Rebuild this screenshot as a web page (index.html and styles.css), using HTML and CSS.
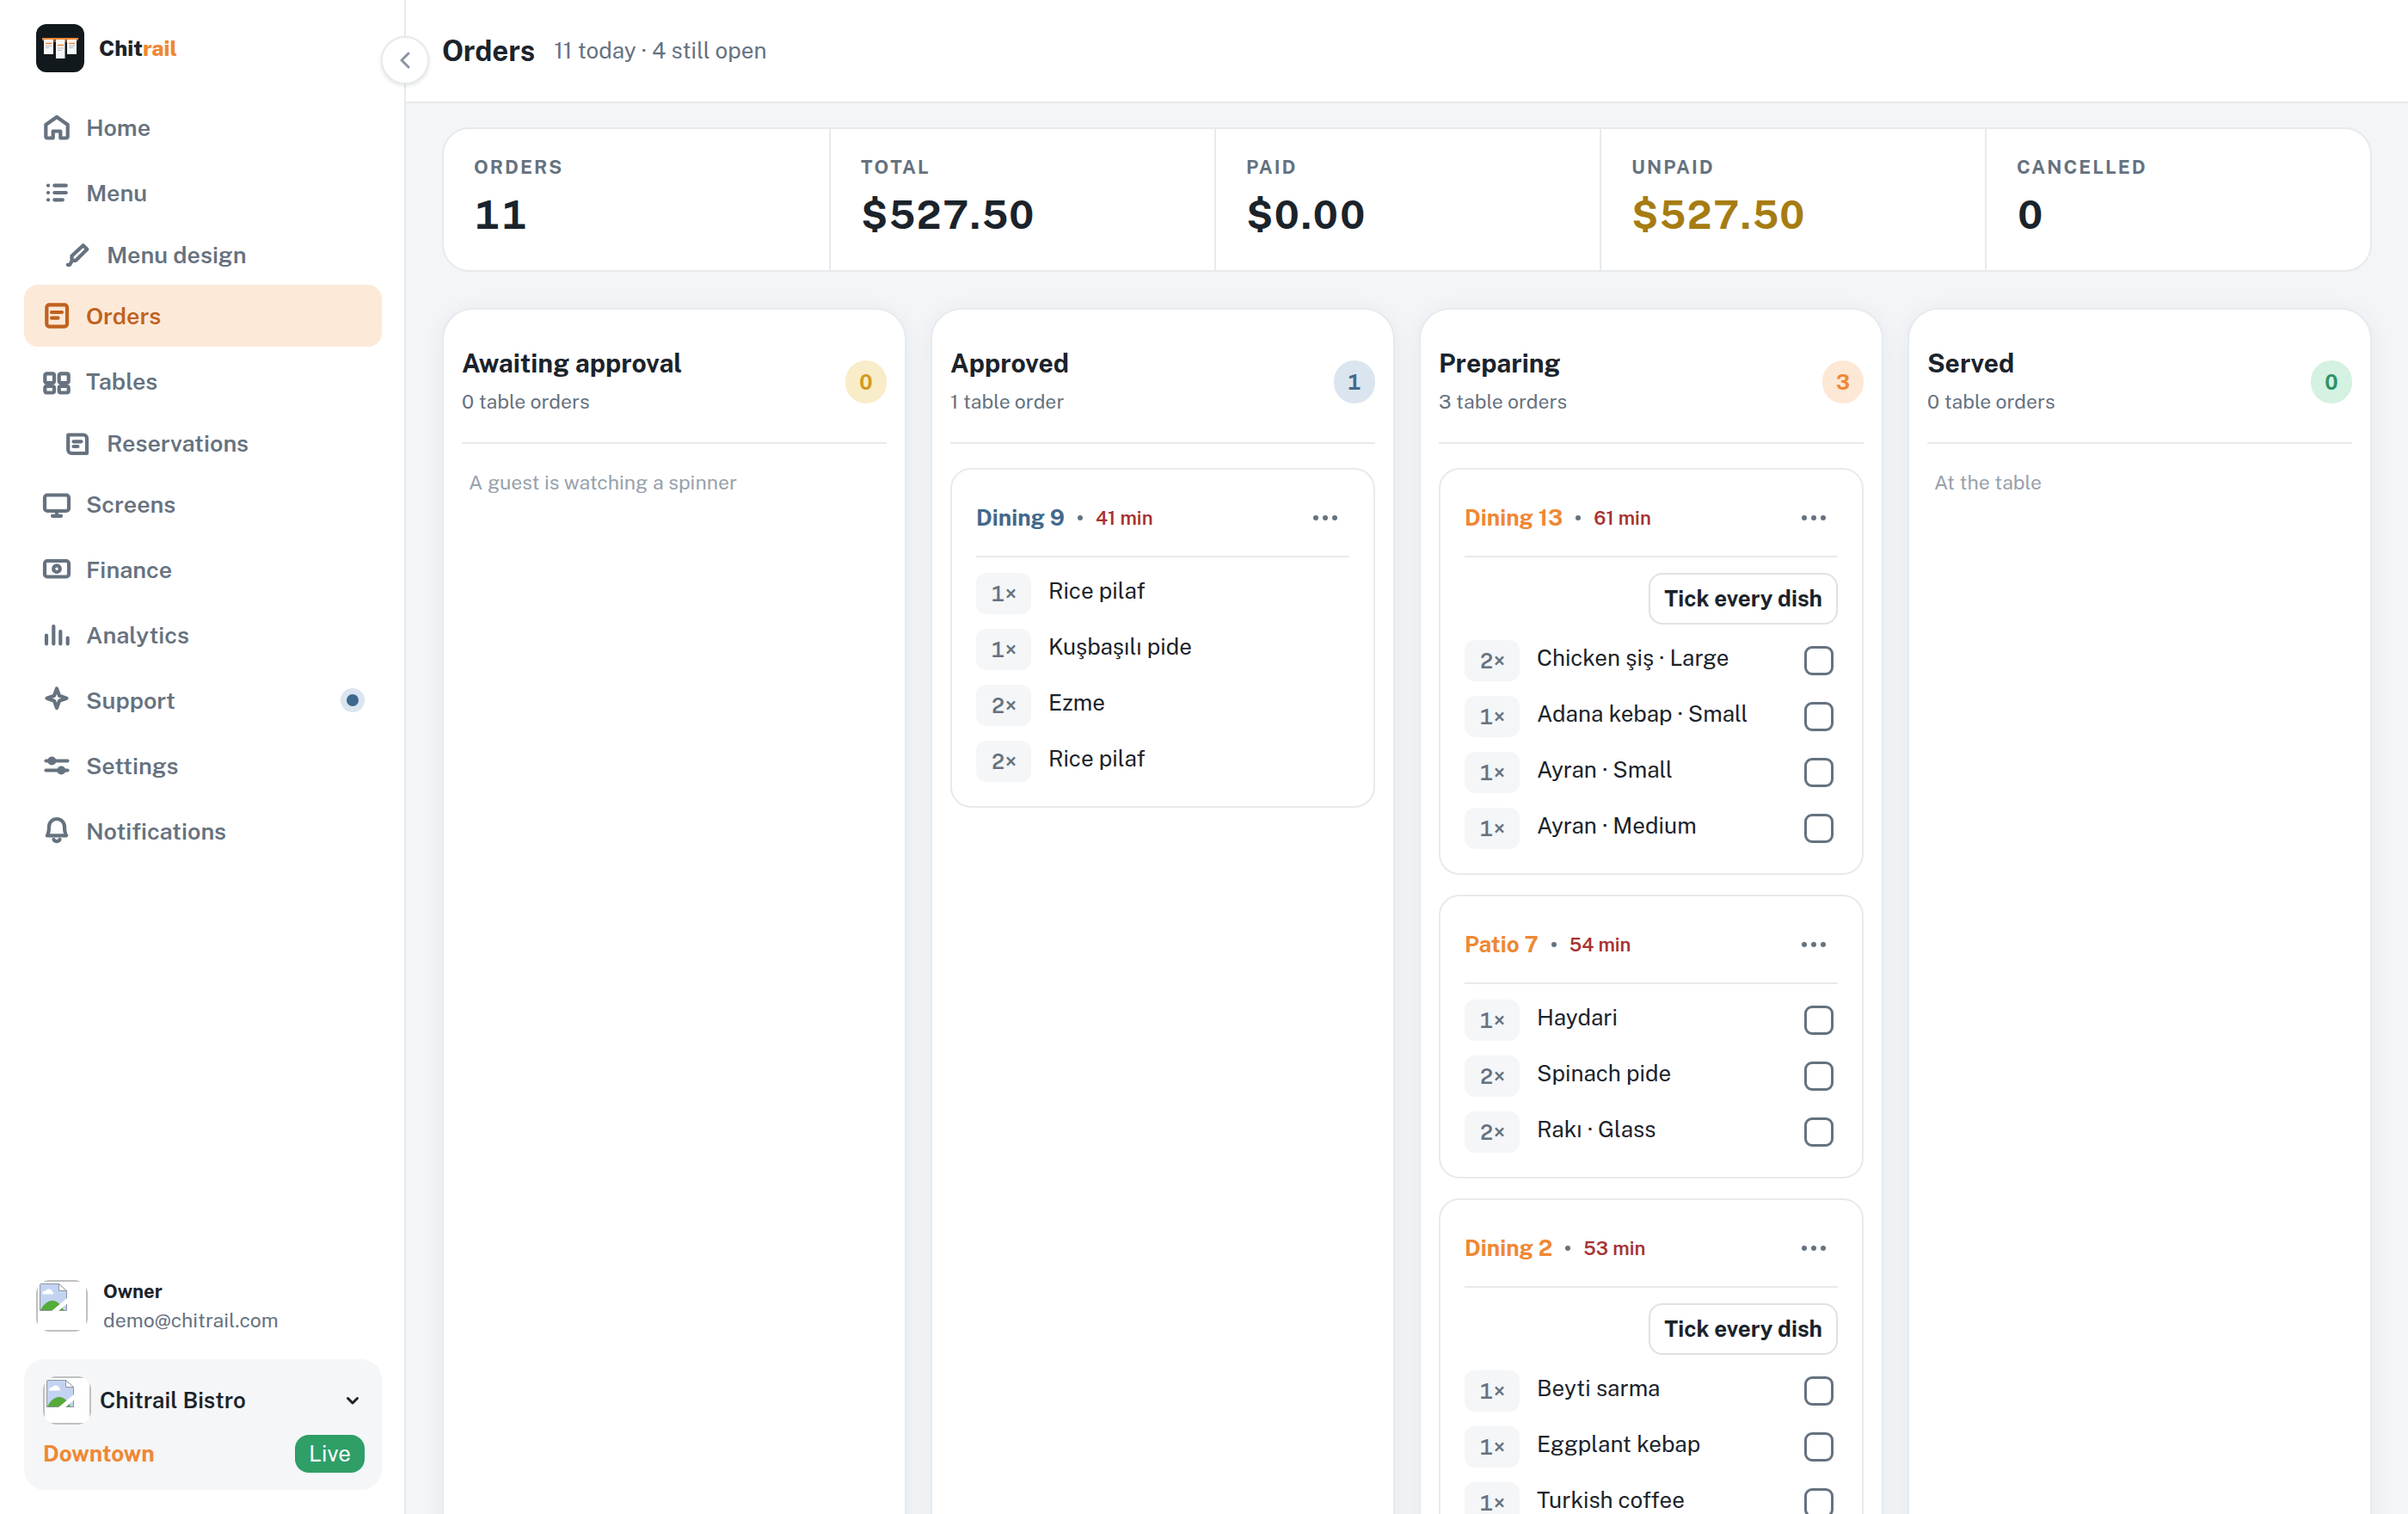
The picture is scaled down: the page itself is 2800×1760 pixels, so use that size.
FILE: index.html
```html
<!DOCTYPE html>
<html lang="en">
<head>
  <meta charset="UTF-8">
  <meta name="viewport" content="width=device-width, initial-scale=1.0">
  <title>Orders - Chitrail</title>
  <link rel="stylesheet" href="styles.css">
</head>
<body>
  <!-- Shared symbols -->
  <svg class="symbols" aria-hidden="true">
    <symbol id="broken" viewBox="0 0 32 32">
      <path d="M0.5 0.5H22.5L31.5 9V31.5H0.5Z" fill="#c3d3f2" stroke="#8f959d"/>
      <path d="M3 12.5a4 4 0 0 1 4-4a4.500 4.500 0 0 1 8 1a3 3 0 0 1 1 3Z" fill="#fff"/>
      <path d="M1 31C5 24 9 20 15 20C21 20 25 25 28 31Z" fill="#55ab38"/>
      <path d="M22.500 0.500V8.500H31.500Z" fill="#fff" stroke="#8f959d"/>
      <path d="M14 32L32 17V23.500L22 32Z" fill="#fff"/>
    </symbol>
    <symbol id="dots" viewBox="0 0 36 36">
      <circle cx="7" cy="18" r="3"/><circle cx="18" cy="18" r="3"/><circle cx="29" cy="18" r="3"/>
    </symbol>
  </svg>

  <div class="app">
    <aside class="sidebar">
      <a class="brand" href="#">
        <svg width="56" height="56" viewBox="0 0 56 56">
          <rect width="56" height="56" rx="12" fill="#12191d"/>
          <rect x="7" y="16" width="42" height="2.500" fill="#ef8834"/>
          <path d="M8 18h3v2h-3zM19 18h5v3h-5zM32 18h5v3h-5zM45 18h3v2h-3z" fill="#9a531d"/>
          <path d="M9 18h11v17H9zM23 18h10.500v22H23zM36 18h11v17H36z" fill="#f5f6f7"/>
          <path d="M11 22.500h7M25 24.500h7M38 22.500h7" stroke="#ef8834" stroke-width="1.500"/>
          <path d="M11 25.500h7M11 27.500h4M25 28h7M25 30.500h5M38 25.500h7M38 27.500h5" stroke="#a9adb2" stroke-width="0.800"/>
        </svg>
        <span>Chit<b>rail</b></span>
      </a>

      <nav class="nav">
        <a class="nav-item" href="#">
          <svg class="icon" viewBox="0 0 36 36"><path d="M18 6L5.300 15V28.500a2 2 0 0 0 2 2H13.700V22.500h8.600v8h6.400a2 2 0 0 0 2-2V15Z"/></svg>
          Home
        </a>
        <a class="nav-item" href="#">
          <svg class="icon" viewBox="0 0 36 36"><path d="M8 9.700h.1M8 18h.1M8 26.300h.1M15.300 9.700h13.500M15.300 18h13.500M15.300 26.300h9.600"/></svg>
          Menu
        </a>
        <a class="nav-item nav-sub" href="#">
          <svg class="icon" viewBox="0 0 36 36"><path d="M24.700 7.200L29.300 11.700L16.200 24.800H11.500V19.500Z"/><path d="M12 25L9 29.800H6.800"/></svg>
          Menu design
        </a>
        <a class="nav-item active" href="#">
          <svg class="icon" viewBox="0 0 36 36"><rect x="6.300" y="5.300" width="23.700" height="25.300" rx="3"/><path d="M12 14h12M12 20.700h7.500"/></svg>
          Orders
        </a>
        <a class="nav-item" href="#">
          <svg class="icon" viewBox="0 0 36 36"><rect x="4.300" y="9.300" width="10.700" height="10.700" rx="2"/><rect x="20.700" y="9.300" width="11" height="10.700" rx="2"/><rect x="4.300" y="24" width="10.700" height="7.500" rx="2"/><rect x="20.700" y="24" width="11" height="7.500" rx="2"/></svg>
          Tables
        </a>
        <a class="nav-item nav-sub" href="#">
          <svg class="icon" viewBox="0 0 36 36"><path d="M7.200 8.500H25a4 4 0 0 1 4 4V30H11.200a4 4 0 0 1-4-4Z"/><path d="M13.500 16.300h9M13.500 22h5"/></svg>
          Reservations
        </a>
        <a class="nav-item" href="#">
          <svg class="icon" viewBox="0 0 36 36"><rect x="4" y="7.500" width="28" height="18.500" rx="3"/><path d="M18 26v5.500M13 31.800h10"/></svg>
          Screens
        </a>
        <a class="nav-item" href="#">
          <svg class="icon" viewBox="0 0 36 36"><rect x="4" y="8" width="28" height="18.500" rx="3"/><circle cx="18" cy="17.200" r="3.800"/></svg>
          Finance
        </a>
        <a class="nav-item" href="#">
          <svg class="icon" viewBox="0 0 36 36"><path d="M6 18.500v10M14.300 8v20.500M22.300 14v14.500M30.700 21.500v7"/></svg>
          Analytics
        </a>
        <a class="nav-item" href="#">
          <svg class="icon" viewBox="0 0 36 36"><path d="M18 4.500L21 12.700L29.500 15.700L21 18.700L18 27L15 18.700L6.500 15.700L15 12.700Z"/></svg>
          Support
          <span class="nav-dot"></span>
        </a>
        <a class="nav-item" href="#">
          <svg class="icon" viewBox="0 0 36 36"><path d="M5.500 12.500h25M5.500 23.500h25"/><circle class="solid" cx="12.300" cy="12.500" r="3"/><circle class="solid" cx="23.300" cy="23.500" r="3"/></svg>
          Settings
        </a>
        <a class="nav-item" href="#">
          <svg class="icon" viewBox="0 0 36 36"><path d="M6.800 23.300C9 20 9 17 9 13a9 9 0 0 1 18 0c0 4 0 7 2.200 10.300Z"/><path d="M14.500 28a3.700 3 0 0 0 7 0"/></svg>
          Notifications
        </a>
      </nav>

      <div class="account">
        <span class="avatar avatar-user"><svg><use href="#broken"/></svg></span>
        <div>
          <div class="account-name">Owner</div>
          <div class="account-email">demo@chitrail.com</div>
        </div>
      </div>

      <div class="venue">
        <button class="venue-switch" type="button">
          <span class="avatar avatar-venue"><svg><use href="#broken"/></svg></span>
          <span class="venue-name">Chitrail Bistro</span>
          <svg class="chevron" viewBox="0 0 28 28"><path d="M8.500 11.500L14 17L19.500 11.500"/></svg>
        </button>
        <div class="venue-row">
          <span class="venue-branch">Downtown</span>
          <span class="live">Live</span>
        </div>
      </div>

      <button class="collapse" type="button" aria-label="Collapse sidebar">
        <svg viewBox="0 0 28 28"><path d="M18 6L10 14L18 22"/></svg>
      </button>
    </aside>

    <main class="main">
      <header class="topbar">
        <h1>Orders</h1>
        <p>11 today · 4 still open</p>
      </header>

      <div class="content">
        <dl class="stats">
          <div class="stat"><dt>Orders</dt><dd>11</dd></div>
          <div class="stat"><dt>Total</dt><dd>$527.50</dd></div>
          <div class="stat"><dt>Paid</dt><dd>$0.00</dd></div>
          <div class="stat"><dt>Unpaid</dt><dd class="due">$527.50</dd></div>
          <div class="stat"><dt>Cancelled</dt><dd>0</dd></div>
        </dl>

        <div class="board">
          <section class="column">
            <div class="column-head">
              <div>
                <h2>Awaiting approval</h2>
                <p>0 table orders</p>
              </div>
              <span class="count count-yellow">0</span>
            </div>
            <p class="empty">A guest is watching a spinner</p>
          </section>

          <section class="column">
            <div class="column-head">
              <div>
                <h2>Approved</h2>
                <p>1 table order</p>
              </div>
              <span class="count count-blue">1</span>
            </div>
            <article class="card">
              <div class="card-head">
                <h3 class="blue">Dining 9</h3><i class="sep"></i><span class="age">41 min</span>
                <button class="more" type="button" aria-label="More"><svg><use href="#dots"/></svg></button>
              </div>
              <ul class="dishes">
                <li><span class="qty">1×</span><span class="dish">Rice pilaf</span></li>
                <li><span class="qty">1×</span><span class="dish">Kuşbaşılı pide</span></li>
                <li><span class="qty">2×</span><span class="dish">Ezme</span></li>
                <li><span class="qty">2×</span><span class="dish">Rice pilaf</span></li>
              </ul>
            </article>
          </section>

          <section class="column">
            <div class="column-head">
              <div>
                <h2>Preparing</h2>
                <p>3 table orders</p>
              </div>
              <span class="count count-orange">3</span>
            </div>
            <article class="card">
              <div class="card-head">
                <h3>Dining 13</h3><i class="sep"></i><span class="age">61 min</span>
                <button class="more" type="button" aria-label="More"><svg><use href="#dots"/></svg></button>
              </div>
              <button class="tick-all" type="button">Tick every dish</button>
              <ul class="dishes">
                <li><span class="qty">2×</span><label class="dish" for="d1">Chicken şiş · Large</label><input type="checkbox" id="d1"></li>
                <li><span class="qty">1×</span><label class="dish" for="d2">Adana kebap · Small</label><input type="checkbox" id="d2"></li>
                <li><span class="qty">1×</span><label class="dish" for="d3">Ayran · Small</label><input type="checkbox" id="d3"></li>
                <li><span class="qty">1×</span><label class="dish" for="d4">Ayran · Medium</label><input type="checkbox" id="d4"></li>
              </ul>
            </article>
            <article class="card">
              <div class="card-head">
                <h3>Patio 7</h3><i class="sep"></i><span class="age">54 min</span>
                <button class="more" type="button" aria-label="More"><svg><use href="#dots"/></svg></button>
              </div>
              <ul class="dishes">
                <li><span class="qty">1×</span><label class="dish" for="d5">Haydari</label><input type="checkbox" id="d5"></li>
                <li><span class="qty">2×</span><label class="dish" for="d6">Spinach pide</label><input type="checkbox" id="d6"></li>
                <li><span class="qty">2×</span><label class="dish" for="d7">Rakı · Glass</label><input type="checkbox" id="d7"></li>
              </ul>
            </article>
            <article class="card">
              <div class="card-head">
                <h3>Dining 2</h3><i class="sep"></i><span class="age">53 min</span>
                <button class="more" type="button" aria-label="More"><svg><use href="#dots"/></svg></button>
              </div>
              <button class="tick-all" type="button">Tick every dish</button>
              <ul class="dishes">
                <li><span class="qty">1×</span><label class="dish" for="d8">Beyti sarma</label><input type="checkbox" id="d8"></li>
                <li><span class="qty">1×</span><label class="dish" for="d9">Eggplant kebap</label><input type="checkbox" id="d9"></li>
                <li><span class="qty">1×</span><label class="dish" for="d10">Turkish coffee</label><input type="checkbox" id="d10"></li>
              </ul>
            </article>
          </section>

          <section class="column">
            <div class="column-head">
              <div>
                <h2>Served</h2>
                <p>0 table orders</p>
              </div>
              <span class="count count-green">0</span>
            </div>
            <p class="empty">At the table</p>
          </section>
        </div>
      </div>
    </main>
  </div>
</body>
</html>
```

FILE: styles.css
```css
* {
  box-sizing: border-box;
}
body {
  margin: 0;
  font-family: "Public Sans", Inter, "Liberation Sans", sans-serif;
  font-size: 26px;
  line-height: 40px;
  color: #1b232b;
  background: #f3f5f8;
}
h1, h2, h3, p, dl, dd, ul {
  margin: 0;
  padding: 0;
}
a {
  color: inherit;
  text-decoration: none;
}
button {
  font: inherit;
  color: inherit;
  background: none;
  border: 0;
  padding: 0;
  cursor: pointer;
}
.symbols {
  display: none;
}
.app {
  display: flex;
  height: 100vh;
  overflow: hidden;
}

/* Sidebar */
.sidebar {
  position: relative;
  display: flex;
  flex-direction: column;
  flex: 0 0 472px;
  padding: 28px 26px 28px 28px;
  background: #fff;
  border-right: 2px solid #e7eaed;
}
.brand {
  display: flex;
  align-items: center;
  gap: 17px;
  padding-left: 14px;
  font-size: 25px;
  font-weight: 800;
}
.brand b {
  font-weight: 800;
  color: #ef8834;
}
.nav {
  display: flex;
  flex-direction: column;
  gap: 4px;
  margin-top: 28px;
}
.nav-item {
  display: flex;
  align-items: center;
  gap: 16px;
  height: 72px;
  padding: 0 20px;
  border-radius: 16px;
  font-size: 27px;
  font-weight: 600;
  color: #66727f;
}
.nav-sub {
  height: 63px;
  padding-left: 44px;
}
.nav-item.active {
  color: #c0621f;
  background: #fde9d8;
}
.icon {
  width: 36px;
  height: 36px;
  fill: none;
  stroke: currentColor;
  stroke-width: 4.2;
  stroke-linecap: round;
  stroke-linejoin: round;
}
.icon .solid {
  fill: currentColor;
}
.nav-dot {
  width: 28px;
  height: 28px;
  margin-left: auto;
  border: 7px solid #dae5ef;
  border-radius: 50%;
  background: #3d688d;
}
.account {
  display: flex;
  align-items: center;
  gap: 18px;
  margin-top: auto;
  padding-left: 14px;
  font-size: 23px;
  line-height: 34px;
}
.account-name {
  font-size: 22px;
  font-weight: 700;
}
.account-email {
  color: #66727f;
}
.avatar {
  display: block;
  overflow: hidden;
  background: linear-gradient(#fff, #fff) center / calc(100% - 4px) calc(100% - 4px) no-repeat #c0c0c0;
}
.avatar svg {
  display: block;
  width: 32px;
  height: 32px;
  margin: 4px;
}
.avatar-user {
  width: 60px;
  height: 60px;
  border-radius: 16px;
}
.avatar-venue {
  width: 56px;
  height: 56px;
  border-radius: 16px;
}
.venue {
  margin-top: 28px;
  padding: 20px 20px 20px 22px;
  border-radius: 24px;
  background: #f4f6f8;
}
.venue-switch {
  display: flex;
  align-items: center;
  gap: 10px;
  width: 100%;
  font-weight: 600;
}
.chevron {
  width: 28px;
  height: 28px;
  margin-left: auto;
  fill: none;
  stroke: currentColor;
  stroke-width: 3;
  stroke-linecap: round;
  stroke-linejoin: round;
}
.venue-row {
  display: flex;
  align-items: center;
  justify-content: space-between;
  margin-top: 12px;
}
.venue-branch {
  font-weight: 700;
  color: #ef8834;
}
.live {
  padding: 2px 16px;
  border-radius: 16px;
  color: #fff;
  background: #2f9e67;
}
.collapse {
  position: absolute;
  top: 42px;
  right: -29px;
  z-index: 1;
  width: 56px;
  height: 56px;
  border: 2px solid #e7eaed;
  border-radius: 50%;
  background: #fff;
  box-shadow: 0 2px 4px rgba(20, 30, 45, 0.12);
}
.collapse svg {
  display: block;
  width: 28px;
  height: 28px;
  margin: 0 auto;
  fill: none;
  stroke: #8a95a1;
  stroke-width: 3;
  stroke-linecap: round;
  stroke-linejoin: round;
}

/* Main */
.main {
  flex: 1;
  min-width: 0;
}
.topbar {
  display: flex;
  align-items: center;
  gap: 22px;
  height: 120px;
  padding: 0 42px;
  background: #fff;
  border-bottom: 2px solid #e7eaed;
}
h1 {
  font-size: 33px;
  font-weight: 700;
}
.topbar p {
  color: #66727f;
}
.content {
  padding: 28px 42px;
}
.stats {
  display: grid;
  grid-template-columns: repeat(5, 1fr);
  border: 2px solid #e7eaed;
  border-radius: 32px;
  background: #fff;
}
.stat {
  height: 164px;
  padding: 28px 35px;
}
.stat + .stat {
  border-left: 2px solid #e7eaed;
}
.stat dt {
  font-size: 22px;
  font-weight: 700;
  line-height: 32px;
  letter-spacing: 2px;
  text-transform: uppercase;
  color: #66727f;
}
.stat dd {
  margin-top: 12px;
  font-size: 45px;
  font-weight: 700;
  line-height: 56px;
  font-variant-numeric: tabular-nums;
}
.stat .due {
  color: #a67c12;
}

/* Board */
.board {
  display: grid;
  grid-template-columns: repeat(4, 1fr);
  gap: 28px;
  margin-top: 42px;
}
.column {
  padding: 42px 21px 24px;
  border: 2px solid #e7eaed;
  border-radius: 36px;
  background: #fff;
  box-shadow: 0 4px 28px rgba(30, 50, 80, 0.06);
}
.column-head {
  display: flex;
  align-items: center;
  justify-content: space-between;
  height: 114px;
  margin-bottom: 28px;
  padding-bottom: 28px;
  border-bottom: 2px solid #e7eaed;
}
h2 {
  font-size: 30px;
  font-weight: 700;
  line-height: 46px;
}
.column-head p {
  font-size: 23px;
  line-height: 44px;
  color: #66727f;
}
.count {
  width: 48px;
  height: 50px;
  border-radius: 25px;
  font-size: 24px;
  font-weight: 700;
  font-variant-numeric: tabular-nums;
  line-height: 50px;
  text-align: center;
}
.count-yellow {
  color: #d09a1c;
  background: #f9ecc8;
}
.count-blue {
  color: #41698b;
  background: #dae5ef;
}
.count-orange {
  color: #ef8834;
  background: #fde8d5;
}
.count-green {
  color: #2f9466;
  background: #d5f1e2;
}
.empty {
  padding: 0 8px;
  font-size: 23px;
  line-height: 34px;
  color: #97a1ac;
}
.card {
  padding: 28px;
  border: 2px solid #e7eaed;
  border-radius: 24px;
}
.card + .card {
  margin-top: 23px;
}
.card-head {
  display: flex;
  align-items: center;
  gap: 15px;
  margin-bottom: 18px;
  padding-bottom: 16px;
  border-bottom: 2px solid #e7eaed;
}
h3 {
  font-size: 26px;
  font-weight: 700;
  color: #ef8834;
}
h3.blue {
  color: #41698b;
}
.sep {
  width: 6px;
  height: 6px;
  border-radius: 50%;
  background: #66727f;
}
.age {
  font-size: 22px;
  font-weight: 600;
  color: #a63232;
}
.more {
  width: 56px;
  height: 56px;
  margin-left: auto;
}
.more svg {
  display: block;
  width: 36px;
  height: 36px;
  margin: 0 auto;
  fill: #66727f;
}
.tick-all {
  display: block;
  height: 60px;
  margin: 0 0 18px auto;
  padding: 0 16px;
  border: 2px solid #dfe2e5;
  border-radius: 16px;
  font-weight: 700;
}
.dishes {
  display: grid;
  gap: 17px;
  list-style: none;
}
.dishes li {
  display: flex;
  align-items: flex-start;
}
.qty {
  flex: 0 0 64px;
  border-radius: 12px;
  font-size: 24px;
  font-weight: 600;
  font-variant-numeric: tabular-nums;
  line-height: 48px;
  text-align: center;
  color: #66727f;
  background: #f4f6f8;
}
.dish {
  flex: 1;
  margin-left: 20px;
  line-height: 42px;
}
.dishes input {
  appearance: none;
  width: 34px;
  height: 34px;
  margin: 7px 5px 0 0;
  border: 3px solid #66727f;
  border-radius: 9px;
  background: #fff;
}
```
